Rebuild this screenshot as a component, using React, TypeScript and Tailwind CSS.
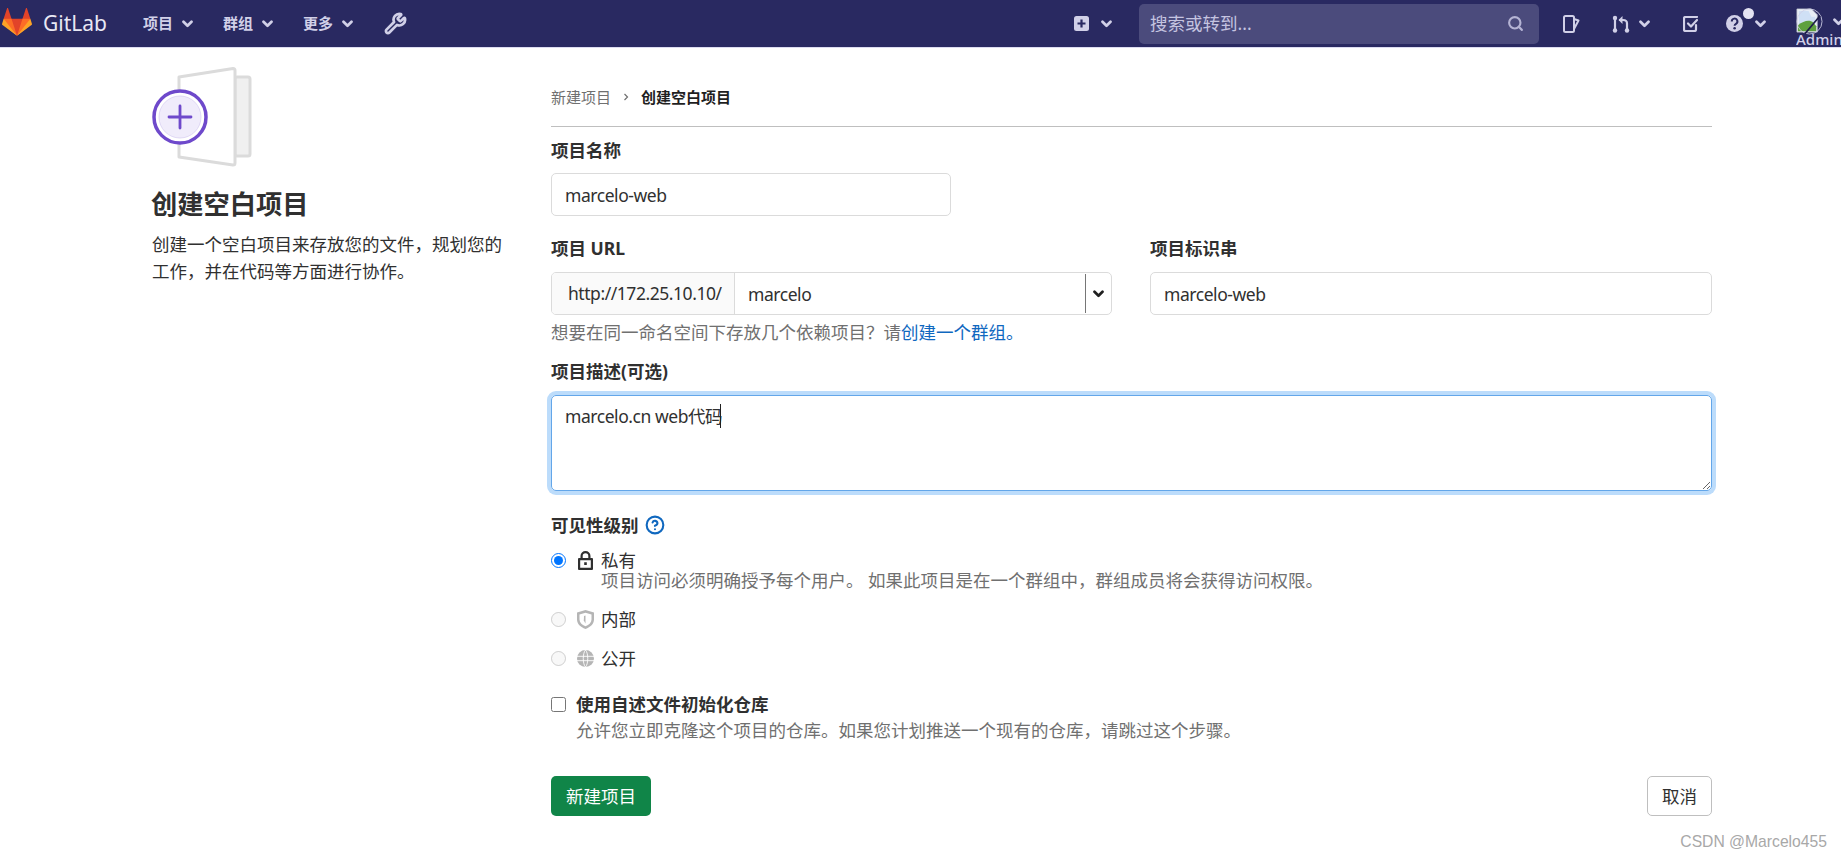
import React from 'react';
import { CircleHelp, Search, Wrench } from 'lucide-react';

const FONT = "font-['Segoe_UI','Noto_Sans','Noto_Sans_CJK_SC',sans-serif]";

const Chevron = ({ className = 'w-[11px] h-[8px] text-[#d1d0e8]' }: { className?: string }) => (
  <svg viewBox="0 0 11 8" className={className} fill="none" stroke="currentColor" strokeWidth="2.7" strokeLinecap="round" strokeLinejoin="round">
    <path d="M1.5 1.8 5.5 5.8 9.5 1.8" />
  </svg>
);

const Tanuki = () => (
  <svg viewBox="0 0 36 36" className="w-[30px] h-[30px]">
    <path fill="#e24329" d="M2 14l9.38 9v-9l-4-12.28c-.205-.632-1.176-.632-1.38 0z" />
    <path fill="#e24329" d="M34 14l-9.38 9v-9l4-12.28c.205-.632 1.176-.632 1.38 0z" />
    <path fill="#e24329" d="M18,34.38 3,14 33,14 Z" />
    <path fill="#fc6d26" d="M18,34.38 11.38,14 2,14 6,25Z" />
    <path fill="#fc6d26" d="M18,34.38 24.62,14 34,14 30,25Z" />
    <path fill="#fca326" d="M2 14L.1 20.16c-.18.565 0 1.2.5 1.56l17.42 12.66z" />
    <path fill="#fca326" d="M34 14l1.9 6.16c.18.565 0 1.2-.5 1.56L18 34.38z" />
  </svg>
);

const NavMenu = ({ label }: { label: string }) => (
  <div className="w-[80px] flex items-center gap-[9px] text-[15px] font-bold text-[#d1d0e8]">
    <span>{label}</span>
    <Chevron />
  </div>
);

const Illustration = () => (
  <svg viewBox="0 0 105 105" className="w-[105px] h-[105px]">
    <rect x="85" y="13" width="15" height="79" rx="2" fill="#f0f0f0" stroke="#dbdbdb" strokeWidth="3" />
    <path d="M29 13 83 4.500a2 2 0 0 1 2 2V99a2 2 0 0 1-2 2L29 93z" fill="#fff" stroke="#dbdbdb" strokeWidth="3" strokeLinejoin="round" />
    <circle cx="30" cy="53" r="26" fill="#fff" stroke="#6e49cb" strokeWidth="3.500" />
    <circle cx="30" cy="53" r="21" fill="#f0ecfb" stroke="#d9d0f2" strokeWidth="0.800" />
    <path d="M19 53H41M30 42V64" stroke="#6e49cb" strokeWidth="2.800" strokeLinecap="round" />
  </svg>
);

const Label = ({ children, className = '' }: { children: React.ReactNode; className?: string }) => (
  <div className={`h-[26px] leading-[26px] font-bold text-[#303030] ${className}`}>{children}</div>
);

const inputClass =
  'block w-full h-[43px] px-[13px] border border-[#dbdbdb] rounded-[5px] bg-white text-[#303030] tracking-[-0.45px] outline-none';

const App = () => (
  <div className={`relative h-[860px] overflow-hidden bg-white text-[17.5px] text-[#303030] ${FONT}`}>
    <header className="h-[48px] flex items-center bg-[#292961] border-b border-[#dcdbf0] overflow-hidden">
      <div className="ml-[2px] -mt-[3px]">
        <Tanuki />
      </div>
      <span className="ml-[11px] w-[100px] text-[21px] text-[#e8e8f4]">GitLab</span>
      <NavMenu label="项目" />
      <NavMenu label="群组" />
      <NavMenu label="更多" />
      <Wrench className="w-[23px] h-[23px] ml-[1px] text-[#d1d0e8]" strokeWidth={2.8} />

      <div className="ml-auto flex items-center shrink-0">
        <svg viewBox="0 0 15 15" className="w-[15px] h-[15px]">
          <rect width="15" height="15" rx="2.500" fill="#d1d0e8" />
          <path d="M3.500 7.500h8M7.500 3.500v8" stroke="#292961" strokeWidth="2.200" />
        </svg>
        <Chevron className="ml-[12px] w-[11px] h-[8px] text-[#d1d0e8]" />
        <div className="ml-[27px] w-[400px] h-[40px] flex items-center justify-between pl-[11px] pr-[15px] rounded-[5px] bg-[#4b4b7c] text-[#c5c4e0]">
          <span>搜索或转到...</span>
          <Search className="w-[17px] h-[17px] text-[#b5b4d4]" strokeWidth={3} />
        </div>
        <svg viewBox="0 0 17 18" className="ml-[24px] w-[17px] h-[18px] text-[#d1d0e8]" fill="none" stroke="currentColor" strokeWidth="2" strokeLinejoin="round">
          <path d="M2.500 1h7A1.500 1.500 0 0 1 11 2.500v13A1.500 1.500 0 0 1 9.500 17h-7A1.500 1.500 0 0 1 1 15.500v-13A1.500 1.500 0 0 1 2.500 1z" />
          <path d="M11 4l4.500 1.500L11 14" />
        </svg>
        <svg viewBox="0 0 18 18" className="ml-[32px] w-[18px] h-[18px] text-[#d1d0e8]" fill="none" stroke="currentColor" strokeWidth="2.200" strokeLinecap="round">
          <path d="M3 3v12M15 15V8.500C15 6 13.500 5 11 5H8" />
          <path d="M10.500 1 6.500 5l4 4z" fill="currentColor" stroke="none" />
          <circle cx="3" cy="3" r="2.200" fill="currentColor" stroke="none" />
          <circle cx="3" cy="15.500" r="2.200" fill="currentColor" stroke="none" />
          <circle cx="15" cy="15.500" r="2.200" fill="currentColor" stroke="none" />
        </svg>
        <Chevron className="ml-[9px] w-[11px] h-[8px] text-[#d1d0e8]" />
        <svg viewBox="0 0 16 16" className="ml-[33px] w-[16px] h-[16px] text-[#d1d0e8]" fill="none" stroke="currentColor" strokeWidth="2.200" strokeLinecap="round" strokeLinejoin="round">
          <path d="M13 9v4.500a1.500 1.500 0 0 1-1.500 1.500h-9A1.500 1.500 0 0 1 1 13.500v-11A1.500 1.500 0 0 1 2.500 1H14" />
          <path d="M5 7.500 8 10.500 14 4" />
        </svg>
        <div className="relative ml-[27px] w-[17px] h-[17px]">
          <svg viewBox="0 0 17 17" className="w-[17px] h-[17px]">
            <circle cx="8.500" cy="8.500" r="8.500" fill="#d1d0e8" />
            <path d="M5.800 6.400a2.800 2.800 0 1 1 4.200 2.400c-.9.5-1.400 1-1.400 1.900" fill="none" stroke="#292961" strokeWidth="2" />
            <circle cx="8.600" cy="13.300" r="1.300" fill="#292961" />
          </svg>
          <span className="absolute -top-[7px] left-[17px] w-[11px] h-[11px] rounded-full bg-[#e4e3f2]" />
        </div>
        <Chevron className="ml-[12px] w-[11px] h-[8px] text-[#d1d0e8]" />
        <div className="ml-[30px] w-[45px] h-[47px] flex flex-col overflow-hidden">
          <svg viewBox="0 0 28 28" className="mt-[8px] w-[27px] h-[27px] shrink-0">
            <path d="M1 1h15l6 6v18H1z" fill="#e8eef6" stroke="#c4c8d0" strokeWidth="0.800" />
            <path d="M3 3h10l3 6h4v6L3 18z" fill="#cfe0f5" />
            <path d="M2 24v-6c6-5 12-6 16-3l3 4v5z" fill="#5ea03f" />
            <circle cx="14" cy="14" r="13" fill="none" stroke="#cfcfe6" strokeWidth="0.900" />
            <path d="M9 27 25 8" stroke="#1d1d4a" strokeWidth="1.800" />
          </svg>
          <span className="text-[15px] leading-[14px] -mt-[3px] font-medium text-[#d1d0e8] whitespace-nowrap">Admin</span>
        </div>
        <Chevron className="-ml-[8px] mr-[-3px] w-[11px] h-[8px] text-[#d1d0e8] self-start mt-[18px]" />
      </div>
    </header>

    <main className="flex pl-[152px] pr-[129px]">
      <aside className="w-[399px] shrink-0">
        <div className="mt-[16px] -ml-[2px]">
          <Illustration />
        </div>
        <h1 className="mt-[17px] -ml-[1px] text-[26.25px] leading-[36px] font-bold text-[#303030]">创建空白项目</h1>
        <p className="mt-[9px] w-[356px] leading-[27px]">创建一个空白项目来存放您的文件，规划您的工作，并在代码等方面进行协作。</p>
      </aside>

      <section className="flex-1 min-w-0">
        <nav className="mt-[20px] h-[59px] flex items-center border-b border-[#bfbfbf] text-[15px]">
          <span className="text-[#707070]">新建项目</span>
          <svg viewBox="0 0 6 8" className="ml-[12px] w-[6px] h-[8px] text-[#707070]" fill="none" stroke="currentColor" strokeWidth="1.200">
            <path d="M1.500 1 4.500 4 1.500 7" />
          </svg>
          <span className="ml-[12px] font-bold text-[#1f1f1f]">创建空白项目</span>
        </nav>

        <Label className="mt-[10px]">项目名称</Label>
        <input className={`mt-[10px] !w-[400px] ${inputClass}`} defaultValue="marcelo-web" />

        <div className="mt-[19px] flex gap-[38px]">
          <div className="w-[561px] shrink-0">
            <Label>项目 URL</Label>
            <div className="mt-[11px] h-[43px] flex items-stretch border border-[#dbdbdb] rounded-[5px] overflow-hidden tracking-[-0.45px]">
              <div className="w-[183px] shrink-0 pl-[16px] flex items-center bg-[#fafafa] border-r border-[#dbdbdb] whitespace-nowrap">
                http://172.25.10.10/
              </div>
              <div className="flex-1 pl-[13px] pt-[1px] flex items-center">marcelo</div>
              <div className="w-[26px] shrink-0 flex items-center justify-center my-[1px] border-l border-[#767676]">
                <Chevron className="w-[11px] h-[8px] text-[#202020]" />
              </div>
            </div>
          </div>
          <div className="flex-1 min-w-0">
            <Label>项目标识串</Label>
            <input className={`mt-[11px] ${inputClass}`} defaultValue="marcelo-web" />
          </div>
        </div>

        <p className="mt-[4px] h-[26px] leading-[26px] text-[#707070]">
          想要在同一命名空间下存放几个依赖项目？请<a className="text-[#1068bf]">创建一个群组</a><span className="text-[#1068bf]">。</span>
        </p>

        <Label className="mt-[13px]">项目描述(可选)</Label>
        <div className="relative mt-[11px]">
          <textarea
            className="block w-full h-[96px] px-[13px] py-[7px] leading-[26px] tracking-[-0.45px] border border-[#63a6e9] rounded-[5px] outline-none shadow-[0_0_0_4px_#bcdcfb] text-[#303030]"
            defaultValue="marcelo.cn web代码"
          />
          <span className="absolute left-[169px] top-[9px] w-px h-[24px] bg-[#202020]" />
        </div>

        <Label className="mt-[21px] flex items-center gap-[6px]">
          可见性级别 <CircleHelp className="w-[20px] h-[20px] text-[#1068bf]" strokeWidth={2.5} />
        </Label>

        <div className="mt-[9px] h-[26px] flex items-center">
          <input type="radio" name="visibility" defaultChecked className="w-[15px] h-[15px] m-0" />
          <svg viewBox="0 0 15 19" className="ml-[12px] w-[15px] h-[19px]">
            <path
              fillRule="evenodd"
              fill="#303030"
              d="M2.500 7V5a5 5 0 0 1 10 0v2h1.500a1 1 0 0 1 1 1v10a1 1 0 0 1-1 1H1a1 1 0 0 1-1-1V8a1 1 0 0 1 1-1zM4.700 7h5.600V5a2.800 2.800 0 0 0-5.600 0zM2.200 9.200v7.600h10.600V9.200zM6.200 11.200h2.600v2.800H6.200z"
            />
          </svg>
          <span className="ml-[8px]">私有</span>
        </div>
        <p className="-mt-[3px] ml-[50px] h-[20px] leading-[20px] text-[#707070]">项目访问必须明确授予每个用户。 如果此项目是在一个群组中，群组成员将会获得访问权限。</p>

        <div className="mt-[16px] h-[26px] flex items-center">
          <input type="radio" name="visibility" disabled className="w-[15px] h-[15px] m-0" />
          <svg viewBox="0 0 17 19" className="ml-[11px] w-[17px] h-[19px]">
            <path fillRule="evenodd" fill="#b5b5b5" d="M8.500 0l8.500 2.500V9.500c0 4.500-3.500 7.500-8.500 9.500C3.500 17 0 14 0 9.500V2.500zM8.500 2.800 2.500 4.500v5c0 3 2.300 5.200 6 6.700 3.700-1.500 6-3.700 6-6.700v-5z" />
            <path fill="#b5b5b5" d="M8.500 5.500v8L6.800 10.500 7 6z" />
          </svg>
          <span className="ml-[7px]">内部</span>
        </div>

        <div className="mt-[13px] h-[26px] flex items-center">
          <input type="radio" name="visibility" disabled className="w-[15px] h-[15px] m-0" />
          <svg viewBox="0 0 17 17" className="ml-[11px] w-[17px] h-[17px]">
            <circle cx="8.500" cy="8.500" r="8.500" fill="#b5b5b5" />
            <path d="M0 6.300h17M0 10.700h17M8.500 0C5.500 3 5.500 14 8.500 17M8.500 0c3 3 3 14 0 17" fill="none" stroke="#fff" strokeWidth="0.900" />
          </svg>
          <span className="ml-[7px]">公开</span>
        </div>

        <div className="mt-[20px] h-[26px] flex items-center">
          <input type="checkbox" className="w-[15px] h-[15px] m-0" />
          <span className="ml-[10px] font-bold">使用自述文件初始化仓库</span>
        </div>
        <p className="ml-[25px] h-[26px] leading-[26px] text-[#707070]">允许您立即克隆这个项目的仓库。如果您计划推送一个现有的仓库，请跳过这个步骤。</p>

        <div className="mt-[33px] flex justify-between">
          <button className="w-[100px] h-[40px] rounded-[5px] bg-[#108548] text-white">新建项目</button>
          <button className="w-[65px] h-[40px] rounded-[5px] border border-[#bfbfbf] bg-white text-[#303030]">取消</button>
        </div>
      </section>
    </main>

    <span className="absolute right-[14px] bottom-[6px] font-['Liberation_Sans',sans-serif] text-[15.7px] text-[#a8a8a8]">CSDN @Marcelo455</span>
  </div>
);

export default App;
